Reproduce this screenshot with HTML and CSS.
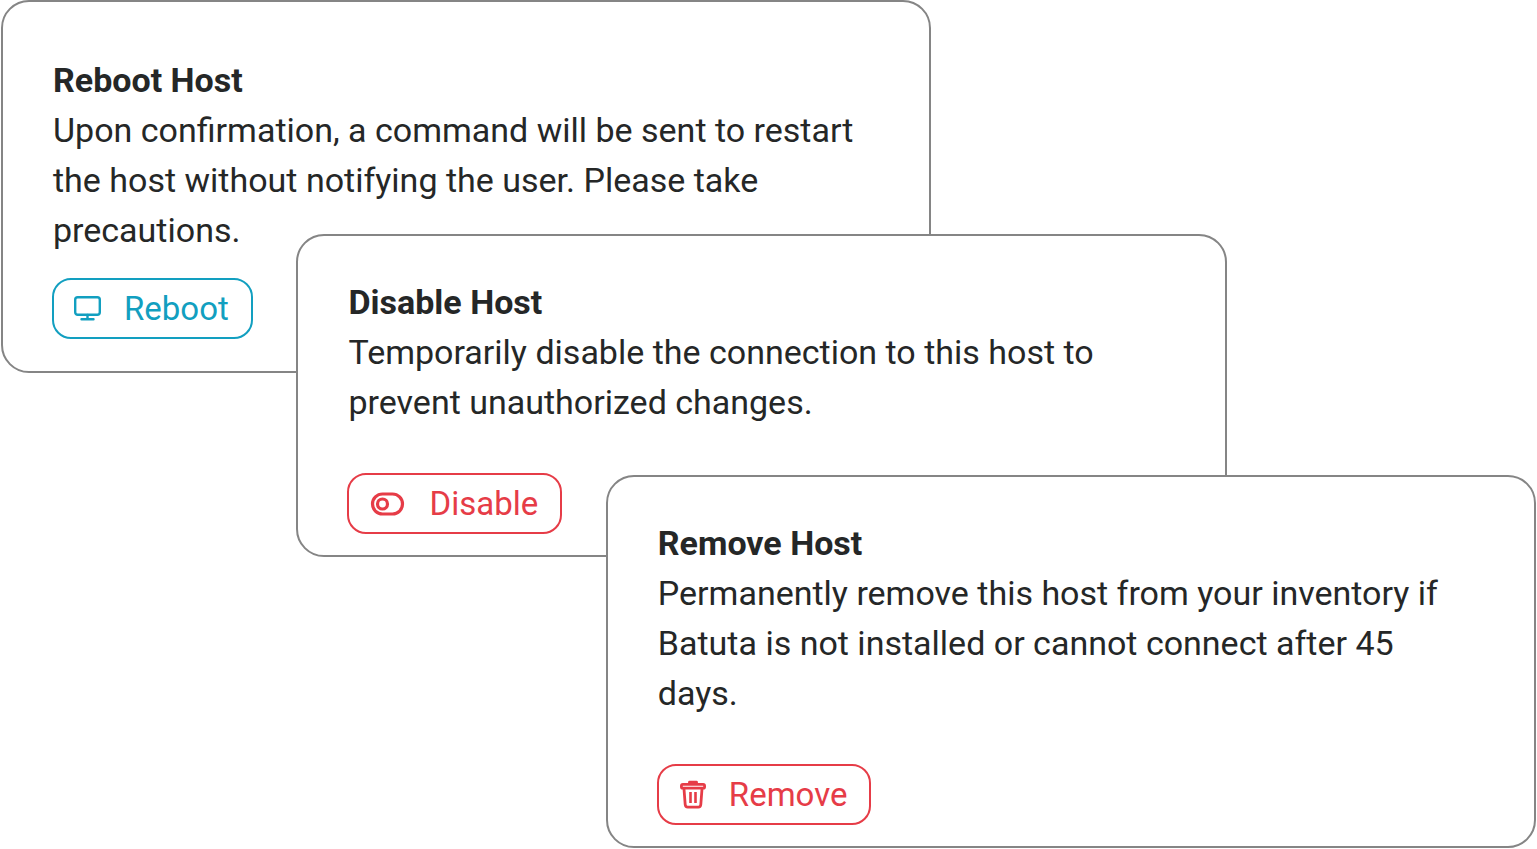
FILE: index.html
```html
<!DOCTYPE html>
<html lang="en">
<head>
<meta charset="utf-8">
<meta name="viewport" content="width=device-width, initial-scale=1">
<title>Host actions</title>
<link rel="stylesheet" href="styles.css">
</head>
<body>
<main class="stack">
  <section class="card card-reboot">
    <h2 class="title">Reboot Host</h2>
    <p class="text">Upon confirmation, a command will be sent to restart the host without notifying the user. Please take precautions.</p>
    <button class="action action-info" type="button">
      <svg class="icon" viewBox="0 0 36 32" fill="none" stroke="currentColor" stroke-width="2.400" stroke-linecap="round" stroke-linejoin="round" aria-hidden="true">
        <rect x="3.200" y="4.200" width="24.600" height="17.600" rx="2.500"/>
        <path d="M15.500 22v4M9.500 26.300h12"/>
      </svg>
      Reboot
    </button>
  </section>
  <section class="card card-disable">
    <h2 class="title">Disable Host</h2>
    <p class="text">Temporarily disable the connection to this host to prevent unauthorized changes.</p>
    <button class="action action-danger" type="button">
      <svg class="icon icon-wide" viewBox="0 0 46 32" fill="none" stroke="currentColor" stroke-width="3.200" aria-hidden="true">
        <rect x="5.500" y="6" width="30" height="20" rx="10"/>
        <circle cx="15.500" cy="16" r="5"/>
      </svg>
      Disable
    </button>
  </section>
  <section class="card card-remove">
    <h2 class="title">Remove Host</h2>
    <p class="text">Permanently remove this host from your inventory if Batuta is not installed or cannot connect after 45 days.</p>
    <button class="action action-danger" type="button">
      <svg class="icon" viewBox="0 0 36 32" fill="none" stroke="currentColor" stroke-width="2.800" stroke-linecap="round" stroke-linejoin="round" aria-hidden="true">
        <path d="M12.500 4.500V3.200h7v1.300z" fill="currentColor"/>
        <rect x="4.400" y="5.400" width="23.200" height="3.800" rx="1.500"/>
        <path d="M7 10l1.200 15.500q.2 2.700 2.600 2.700h10.400q2.400 0 2.600-2.700l1.200-15.500"/>
        <path d="M13.500 13v11M18.500 13v11" stroke-linecap="butt" stroke-width="2.600"/>
      </svg>
      Remove
    </button>
  </section>
</main>
</body>
</html>
```
FILE: styles.css
```css
* {
  box-sizing: border-box;
}

body {
  margin: 0;
  background: #fff;
  color: #252727;
  font-family: Roboto, "Liberation Sans", sans-serif;
  font-size: 34px;
  line-height: 50px;
}

.stack {
  display: flex;
  flex-direction: column;
  align-items: flex-start;
  padding: 0 1px;
}

.card {
  display: flex;
  flex-direction: column;
  align-items: flex-start;
  width: 60.6%;
  padding: 41px 60px 21px 49px;
  background: #fff;
  border: 2px solid #858585;
  border-radius: 28px;
}

.card-reboot {
  padding-top: 53px;
  padding-bottom: 32px;
}

.card-disable {
  margin: -139px 0 0 19.25%;
}

.card-remove {
  align-self: flex-end;
  margin-top: -82px;
}

.title,
.text {
  margin: 0;
  padding-left: 1px;
  font-size: inherit;
}

.title {
  font-weight: 700;
}

.action {
  display: flex;
  align-items: center;
  gap: 16px;
  height: 61px;
  margin-top: 46px;
  padding: 0 22px 0 18px;
  background: transparent;
  border: 2px solid;
  border-radius: 19px;
  font: inherit;
  font-size: 33px;
  cursor: pointer;
}

.card-reboot .action {
  margin-top: 23px;
}

.action-info {
  color: #129fc0;
}

.action-danger {
  color: #e63c47;
}

.icon {
  flex: none;
  width: 36px;
  height: 32px;
}

.icon-wide {
  width: 46px;
}
```
